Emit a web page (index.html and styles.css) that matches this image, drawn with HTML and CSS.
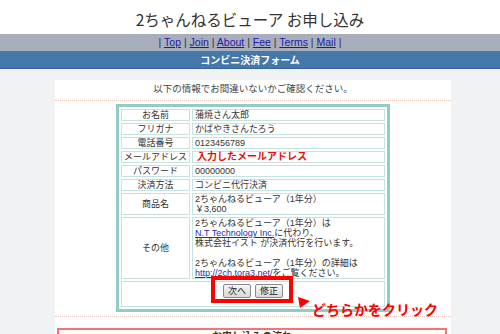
FILE: index.html
```html
<!DOCTYPE html>
<html>
<head>
	<meta charset="utf-8">
	<title>2ちゃんねるビューア お申し込み</title>
	<link rel="stylesheet" href="styles.css">
</head>
<body>
	<h1 class="site-title">2ちゃんねるビューア お申し込み</h1>

	<div class="nav">
		| <a href="#">Top</a> | <a href="#">Join</a> | <a href="#">About</a> | <a href="#">Fee</a> | <a href="#">Terms</a> | <a href="#">Mail</a> |
	</div>

	<div class="form-title">コンビニ決済フォーム</div>

	<div class="main">
		<div class="content">
			<p class="lead">以下の情報でお間違いないかご確認ください。</p>

			<div class="confirm-area">
				<table class="confirm">
					<tr>
						<td class="label">お名前</td>
						<td class="value">蒲焼さん太郎</td>
					</tr>
					<tr>
						<td class="label">フリガナ</td>
						<td class="value">かばやきさんたろう</td>
					</tr>
					<tr>
						<td class="label">電話番号</td>
						<td class="value">0123456789</td>
					</tr>
					<tr>
						<td class="label">メールアドレス</td>
						<td class="value"><span class="note">入力したメールアドレス</span></td>
					</tr>
					<tr>
						<td class="label">パスワード</td>
						<td class="value">00000000</td>
					</tr>
					<tr>
						<td class="label">決済方法</td>
						<td class="value">コンビニ代行決済</td>
					</tr>
					<tr>
						<td class="label">商品名</td>
						<td class="value">2ちゃんねるビューア（1年分）<br>￥3,600</td>
					</tr>
					<tr>
						<td class="label">その他</td>
						<td class="value">
							2ちゃんねるビューア（1年分）は<br>
							<a href="#">N.T Technology Inc.</a>に代わり、<br>
							株式会社イスト が決済代行を行います。<br>
							<br>
							2ちゃんねるビューア（1年分）の詳細は<br>
							<a href="#">http://2ch.tora3.net/</a>をご覧ください。
						</td>
					</tr>
					<tr>
						<td class="actions" colspan="2">
							<div class="buttons">
								<button type="button" class="btn">次へ</button>
								<button type="button" class="btn">修正</button>
							</div>
						</td>
					</tr>
				</table>
			</div>

			<div class="flow">
				<h2 class="flow-title">お申し込みの流れ</h2>
			</div>

			<!-- annotation -->
			<div class="mark-box"></div>
			<svg class="mark-arrow" width="12" height="11" viewBox="0 0 12 11">
				<polygon points="0,0 12,4 2,11" fill="#f00"/>
			</svg>
			<div class="mark-text">どちらかをクリック</div>
		</div>
	</div>
</body>
</html>
```

FILE: styles.css
```css
body{
	margin: 0;
	background-color: #fff;
	font-family: "Liberation Sans", "Noto Sans CJK JP", sans-serif;
	color: #333;
}
.site-title{
	margin: 0;
	height: 34px;
	box-sizing: border-box;
	padding-top: 9px;
	font-size: 15.5px;
	line-height: 20px;
	font-weight: normal;
	text-align: center;
	color: #333;
	font-family: "Noto Sans CJK JP", sans-serif;
}
.nav{
	height: 17px;
	line-height: 17px;
	background-color: #a9aebd;
	text-align: center;
	font-size: 10.5px;
	color: #333;
}
.nav a{
	color: #1a1aa8;
}
.form-title{
	height: 17px;
	line-height: 18px;
	background-color: #4677ab;
	border-bottom: 1px solid #36649a;
	text-align: center;
	color: #fff;
	font-size: 10px;
	font-weight: bold;
	font-family: "Noto Sans CJK JP", sans-serif;
}
.main{
	background-color: #f1f2f4;
	padding-top: 11px;
	height: 254px;
}
.content{
	position: relative;
	width: 396px;
	margin-left: 55px;
	background-color: #fff;
	height: 100%;
	overflow: hidden;
}
.lead{
	margin: 0;
	padding: 3px 0 5px;
	line-height: 12px;
	font-size: 9.5px;
	text-align: center;
	color: #444;
	border-bottom: 1px dotted #efc6b4;
}
.confirm-area{
	padding: 3px 0 4px;
	border-bottom: 1px dotted #e3c9bf;
}
.confirm{
	box-sizing: border-box;
	width: 274px;
	margin: 0 auto;
	table-layout: fixed;
	border: 3px solid #93ccc7;
	border-spacing: 2px;
	font-size: 9px;
	line-height: 10px;
}
.confirm td{
	border: 1px solid #c3e3e0;
	padding: 0 2px;
	color: #333;
	vertical-align: middle;
}
.confirm .label{
	width: 69px;
	box-sizing: border-box;
	text-align: center;
}
.confirm .value{
	text-align: left;
}
.confirm a{
	color: #1b2fb0;
}
.note{
	color: #e80e0e;
	font-weight: bold;
	font-size: 10px;
	padding-left: 2px;
}
.confirm .actions{
	padding: 2px 0 8px;
}
.buttons{
	display: flex;
	justify-content: center;
	gap: 4px;
}
.btn{
	height: 14px;
	width: 28px;
	padding: 0;
	font-size: 9px;
	line-height: 12px;
	font-family: "Noto Sans CJK JP", sans-serif;
	color: #222;
	background: linear-gradient(#f6f6f6, #d9d9d9);
	border: 1px solid #8a8a8a;
	border-radius: 2px;
}
.flow{
	margin: 11px 4px 0 2px;
	border: 2px solid #f77474;
	height: 40px;
}
.flow-title{
	margin: 0;
	padding-top: 1px;
	font-size: 10px;
	line-height: 12px;
	text-align: center;
	color: #333;
}
.mark-box{
	position: absolute;
	left: 156px;
	top: 196px;
	width: 82px;
	height: 27px;
	box-sizing: border-box;
	border: 4px solid #f00;
}
.mark-arrow{
	position: absolute;
	left: 243px;
	top: 217px;
}
.mark-text{
	position: absolute;
	left: 257px;
	top: 221px;
	font-size: 14px;
	line-height: 17px;
	font-weight: bold;
	color: #f00;
	font-family: "Noto Sans CJK JP", sans-serif;
	white-space: nowrap;
}
```
